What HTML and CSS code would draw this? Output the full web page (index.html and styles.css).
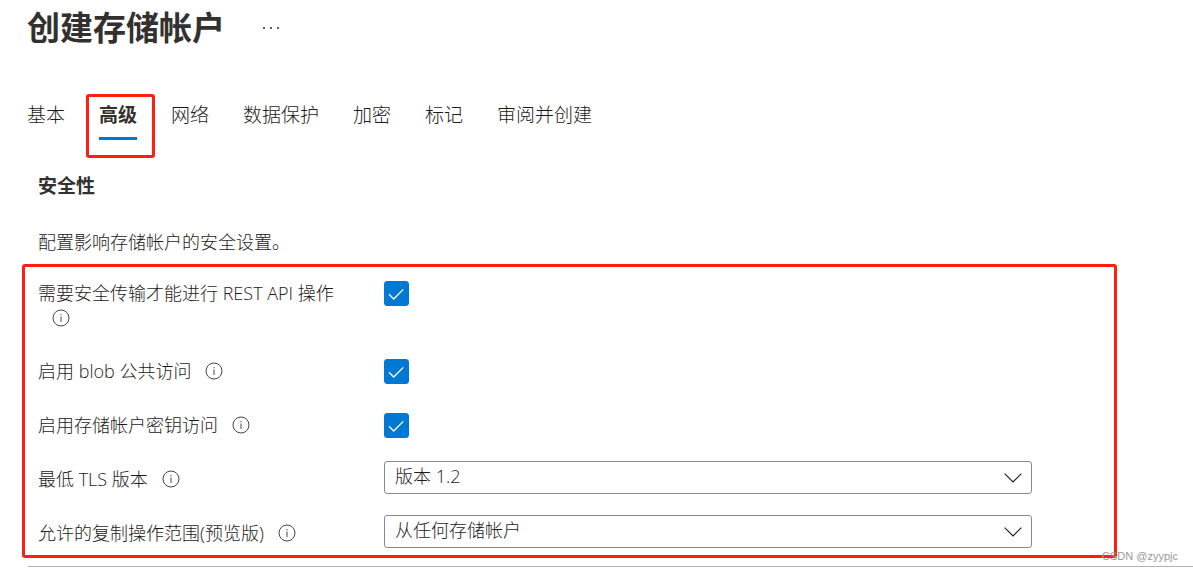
FILE: index.html
```html
<!DOCTYPE html>
<html lang="zh-CN">

<head>
    <meta charset="UTF-8">
    <meta name="viewport" content="width=device-width, initial-scale=1.0">
    <title>创建存储帐户</title>
    <link rel="stylesheet" href="styles.css">
</head>

<body>
    <svg class="symbols" aria-hidden="true">
        <symbol id="info" viewBox="0 0 18 18">
            <circle cx="9" cy="9" r="8" fill="none" stroke="currentColor" />
            <path d="M9 7.5v5.5M9 5v1.3" fill="none" stroke="currentColor" />
        </symbol>
        <symbol id="check" viewBox="0 0 25 25">
            <path d="M5 13.300l4.700 4.700L19.300 8.400" fill="none" stroke="currentColor" stroke-width="1.3" />
        </symbol>
        <symbol id="chevron" viewBox="0 0 18 10">
            <path d="M.7.7L9 9L17.300.7" fill="none" stroke="currentColor" stroke-width="1.1" />
        </symbol>
    </svg>

    <header class="header">
        <h1>创建存储帐户</h1>
        <button class="more" type="button" aria-label="更多">
            <svg viewBox="0 0 18 4" width="18" height="4">
                <path d="M1 1h2v2H1zM8 1h2v2H8zM15 1h2v2h-2z" fill="currentColor" />
            </svg>
        </button>
    </header>

    <nav class="tabs">
        <a class="tab" href="#">基本</a>
        <a class="tab active" href="#">高级</a>
        <a class="tab" href="#">网络</a>
        <a class="tab" href="#">数据保护</a>
        <a class="tab" href="#">加密</a>
        <a class="tab" href="#">标记</a>
        <a class="tab" href="#">审阅并创建</a>
    </nav>

    <main>
        <h2>安全性</h2>
        <p class="description">配置影响存储帐户的安全设置。</p>

        <form class="settings">
            <div class="row">
                <label for="transfer">需要安全传输才能进行 REST API 操作<svg class="info"><use href="#info" /></svg></label>
                <div class="checkbox">
                    <input type="checkbox" id="transfer" checked>
                    <svg><use href="#check" /></svg>
                </div>
            </div>
            <div class="row">
                <label for="blob">启用 blob 公共访问<svg class="info"><use href="#info" /></svg></label>
                <div class="checkbox">
                    <input type="checkbox" id="blob" checked>
                    <svg><use href="#check" /></svg>
                </div>
            </div>
            <div class="row">
                <label for="key">启用存储帐户密钥访问<svg class="info"><use href="#info" /></svg></label>
                <div class="checkbox">
                    <input type="checkbox" id="key" checked>
                    <svg><use href="#check" /></svg>
                </div>
            </div>
            <div class="row">
                <label for="tls">最低 TLS 版本<svg class="info"><use href="#info" /></svg></label>
                <div class="dropdown">
                    <select id="tls">
                        <option>版本 1.2</option>
                    </select>
                    <svg><use href="#chevron" /></svg>
                </div>
            </div>
            <div class="row">
                <label for="scope">允许的复制操作范围(预览版)<svg class="info"><use href="#info" /></svg></label>
                <div class="dropdown">
                    <select id="scope">
                        <option>从任何存储帐户</option>
                    </select>
                    <svg><use href="#chevron" /></svg>
                </div>
            </div>
        </form>
    </main>
    <hr>
    <span class="watermark">CSDN @zyypjc</span>
</body>

</html>
```

FILE: styles.css
```css
body {
    margin: 0;
    padding-top: 8px;
    background-color: white;
    color: #1b1a19;
    font-family: "Open Sans", "Noto Sans CJK SC", sans-serif;
    font-size: 18px;
    font-weight: 300;
    line-height: 25px;
}

.symbols {
    display: none;
}

.header {
    display: flex;
    align-items: center;
    gap: 37px;
    padding-left: 27px;
}

h1 {
    margin: 0;
    color: #323130;
    font-size: 33px;
    font-weight: bold;
    line-height: 40px;
}

.more {
    display: flex;
    padding: 0;
    border: none;
    background: none;
    color: #605e5c;
    cursor: pointer;
}

.tabs {
    display: flex;
    gap: 34px;
    margin-top: 55px;
    padding-left: 27px;
    font-size: 19px;
    line-height: 24px;
}

.tab {
    position: relative;
    padding-bottom: 10px;
    border-bottom: 3px solid transparent;
    color: inherit;
    text-decoration: none;
}

.active {
    border-color: #0078d4;
    color: #323130;
    font-weight: bold;
}

/* red highlight round the current tab */
.active::after {
    content: "";
    position: absolute;
    inset: -9px -18px -21px -13px;
    border: 3px solid #ff1e10;
    border-radius: 3px;
}

h2 {
    margin: 34px 0 0 38px;
    color: #323130;
    font-size: 19px;
    font-weight: bold;
    line-height: 24px;
}

.description {
    margin: 32px 0 0 38px;
    line-height: 24px;
}

.settings {
    display: grid;
    gap: 21px;
    margin: 10px 76px 0 22px;
    padding: 8px 82px 7px 13px;
    border: 3px solid #ff1e10;
    border-radius: 3px;
}

.row {
    display: grid;
    grid-template-columns: 346px 1fr;
    align-items: start;
    min-height: 33px;
}

label {
    max-width: 320px;
    padding: 6px 0 1px;
}

.info {
    width: 18px;
    height: 18px;
    margin-left: 14px;
    color: #484644;
    vertical-align: -2px;
}

.checkbox {
    display: grid;
    width: 25px;
    margin-top: 6px;
}

.checkbox input,
.checkbox svg {
    grid-area: 1 / 1;
    width: 25px;
    height: 25px;
    margin: 0;
}

.checkbox input {
    appearance: none;
    border: 1px solid #0078d4;
    border-radius: 3px;
}

.checkbox input:checked {
    background-color: #0078d4;
}

.checkbox svg {
    color: white;
    pointer-events: none;
}

.dropdown {
    display: grid;
    align-items: center;
}

.dropdown select,
.dropdown svg {
    grid-area: 1 / 1;
}

.dropdown select {
    appearance: none;
    width: 100%;
    height: 33px;
    padding: 0 40px 2px 10px;
    border: 1px solid #8a8886;
    border-radius: 3px;
    background-color: white;
    color: inherit;
    font: inherit;
}

.dropdown svg {
    justify-self: end;
    width: 18px;
    height: 10px;
    margin-right: 10px;
    pointer-events: none;
}

hr {
    margin: 8px 0 0 28px;
    border: none;
    border-top: 1px solid #b3b0ad;
}

.watermark {
    position: absolute;
    right: 15px;
    bottom: 8px;
    color: #999;
    font-family: "Liberation Sans", sans-serif;
    font-size: 11px;
    font-weight: normal;
    line-height: 16px;
}
```
